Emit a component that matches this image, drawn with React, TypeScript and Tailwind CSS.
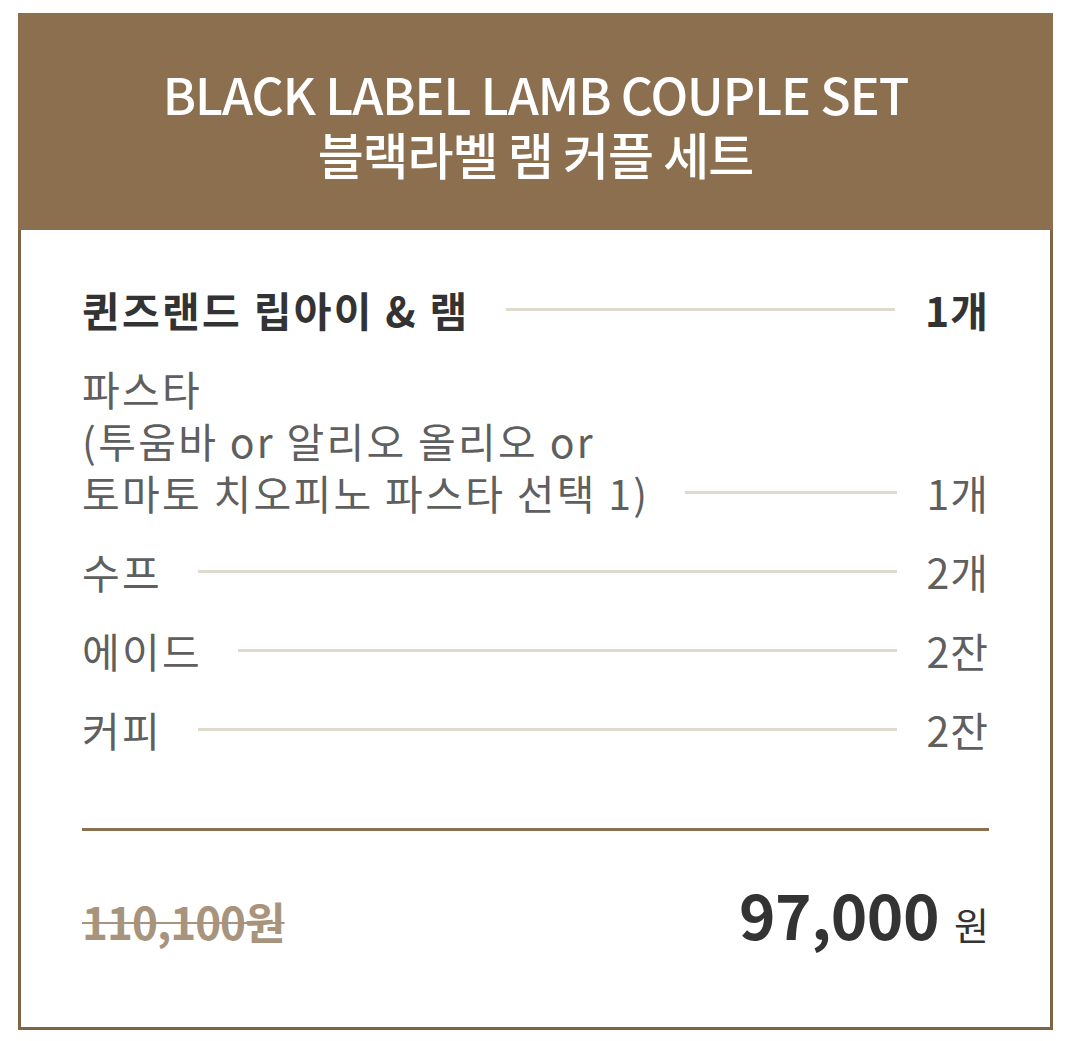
import React from "react";

const font = { fontFamily: '"Noto Sans CJK KR", "Noto Sans", sans-serif' };

type Row = { label: React.ReactNode; qty: string; bold?: boolean };

const rows: Row[] = [
  { label: "퀸즈랜드 립아이 & 램", qty: "1개", bold: true },
  {
    label: (
      <>
        파스타
        <br />
        (투움바 or 알리오 올리오 or
        <br />
        토마토 치오피노 파스타 선택 1)
      </>
    ),
    qty: "1개",
  },
  { label: "수프", qty: "2개" },
  { label: "에이드", qty: "2잔" },
  { label: "커피", qty: "2잔" },
];

export default function App() {
  return (
    <div className="min-h-[1041px] bg-white pt-[13px] pl-[18px]" style={font}>
      <div className="w-[1035px]">
        <div className="bg-[#8b6f4f] pt-[50px] pb-[47px] text-center text-white">
          <div className="text-[50px] font-medium leading-[60px] tracking-[-1px]">
            BLACK LABEL LAMB COUPLE SET
          </div>
          <div className="text-[50px] font-medium leading-[60px] tracking-[-1px]">
            블랙라벨 램 커플 세트
          </div>
        </div>
        <div className="border-x-[3px] border-b-[3px] border-[#7f6446] px-[61px] pt-[53px] pb-[83px]">
          <div className="flex flex-col gap-[27px]">
            {rows.map((r, i) => (
              <div key={i} className="flex items-end">
                <div
                  className={
                    "text-[41px] leading-[52px] tracking-[2.3px] " +
                    (r.bold ? "font-bold text-[#333333]" : "text-[#5f5f5f]")
                  }
                >
                  {r.label}
                </div>
                <div className="mb-[24px] ml-[36px] mr-[30px] h-[3px] flex-1 bg-[#e0d9cd]" />
                <div
                  className={
                    "text-[41px] leading-[52px] tracking-[1px] " +
                    (r.bold ? "font-bold text-[#333333]" : "text-[#5f5f5f]")
                  }
                >
                  {r.qty}
                </div>
              </div>
            ))}
          </div>
          <div className="mt-[73px] h-[3px] bg-[#8b6f4f]" />
          <div className="mt-[51px] flex items-baseline justify-between">
            <div className="text-[44px] font-bold leading-none tracking-[-1px] text-[#a8937c] line-through decoration-[2px]">
              110,100원
            </div>
            <div className="flex items-baseline text-[#333333]">
              <span className="text-[62px] font-bold leading-none tracking-[-0.5px]">97,000</span>
              <span className="ml-[15px] text-[38px] leading-none">원</span>
            </div>
          </div>
        </div>
      </div>
    </div>
  );
}
